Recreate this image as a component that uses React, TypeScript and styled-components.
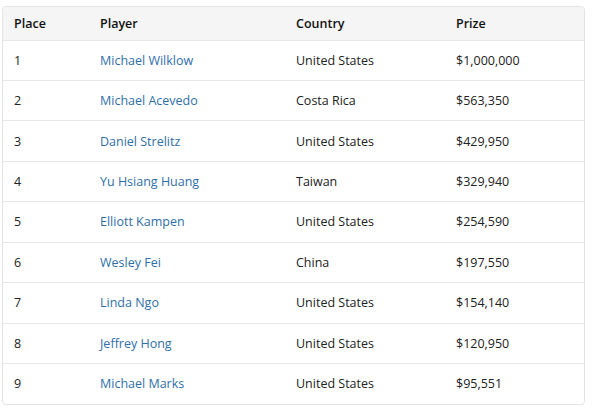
import * as React from 'react';
import styled, { createGlobalStyle } from 'styled-components';

const GlobalStyle = createGlobalStyle`
  html, body {
    margin: 0;
    padding: 0;
    background: #fff;
  }
  body {
    font-family: 'Open Sans', 'Liberation Sans', sans-serif;
  }
`;

const Wrapper = styled.div`
  padding: 6px 7px 0 2px;
`;

const Card = styled.div`
  border: 1px solid #e3e3e3;
  border-radius: 4px;
  overflow: hidden;
`;

const Table = styled.table`
  width: 100%;
  border-collapse: collapse;
  table-layout: fixed;
  font-size: 12.5px;
  color: #222;
`;

const HeadRow = styled.tr`
  background: #f5f5f5;
  height: 33px;
`;

const Th = styled.th<{ $w?: number }>`
  box-sizing: border-box;
  width: ${p => (p.$w ? `${p.$w}px` : 'auto')};
  text-align: left;
  font-weight: 600;
  padding: 0 11px;
  color: #111;
`;

const Row = styled.tr`
  height: 40.45px;
  border-top: 1px solid #e6e6e6;
`;

const Td = styled.td`
  padding: 0 11px;
  vertical-align: middle;
`;

const PlayerLink = styled.a`
  color: #2f6fa8;
  text-decoration: none;
`;

const results = [
  { place: 1, name: 'Michael Wilklow', country: 'United States', prize: '$1,000,000' },
  { place: 2, name: 'Michael Acevedo', country: 'Costa Rica', prize: '$563,350' },
  { place: 3, name: 'Daniel Strelitz', country: 'United States', prize: '$429,950' },
  { place: 4, name: 'Yu Hsiang Huang', country: 'Taiwan', prize: '$329,940' },
  { place: 5, name: 'Elliott Kampen', country: 'United States', prize: '$254,590' },
  { place: 6, name: 'Wesley Fei', country: 'China', prize: '$197,550' },
  { place: 7, name: 'Linda Ngo', country: 'United States', prize: '$154,140' },
  { place: 8, name: 'Jeffrey Hong', country: 'United States', prize: '$120,950' },
  { place: 9, name: 'Michael Marks', country: 'United States', prize: '$95,551' },
];

const App = () => {
  return (
    <Wrapper>
      <GlobalStyle />
      <Card>
        <Table>
          <thead>
            <HeadRow>
              <Th $w={86}>Place</Th>
              <Th $w={196}>Player</Th>
              <Th $w={160}>Country</Th>
              <Th>Prize</Th>
            </HeadRow>
          </thead>
          <tbody>
            {results.map(r => (
              <Row key={r.place}>
                <Td>{r.place}</Td>
                <Td>
                  <PlayerLink href="#">{r.name}</PlayerLink>
                </Td>
                <Td>{r.country}</Td>
                <Td>{r.prize}</Td>
              </Row>
            ))}
          </tbody>
        </Table>
      </Card>
    </Wrapper>
  );
};

export default App;
